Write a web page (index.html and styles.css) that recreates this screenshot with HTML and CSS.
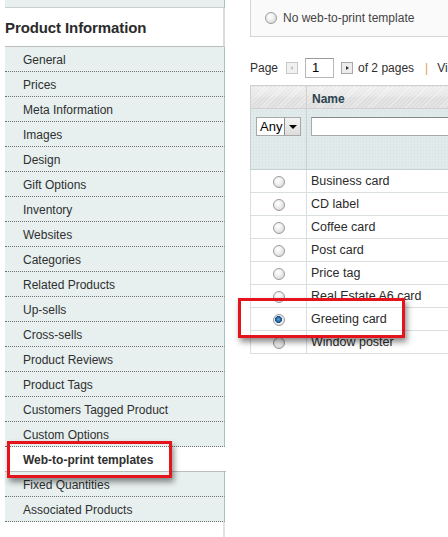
FILE: index.html
```html
<!DOCTYPE html>
<html>
<head>
<meta charset="utf-8">
<link rel="stylesheet" href="styles.css">
</head>
<body>
<div class="page">
  <aside class="side">
    <div class="side-top"></div>
    <h3 class="side-title">Product Information</h3>
    <ul class="tabs">
      <li class="tab">General</li>
      <li class="tab">Prices</li>
      <li class="tab">Meta Information</li>
      <li class="tab">Images</li>
      <li class="tab">Design</li>
      <li class="tab">Gift Options</li>
      <li class="tab">Inventory</li>
      <li class="tab">Websites</li>
      <li class="tab">Categories</li>
      <li class="tab">Related Products</li>
      <li class="tab">Up-sells</li>
      <li class="tab">Cross-sells</li>
      <li class="tab">Product Reviews</li>
      <li class="tab">Product Tags</li>
      <li class="tab">Customers Tagged Product</li>
      <li class="tab">Custom Options</li>
      <li class="tab active">Web-to-print templates</li>
      <li class="tab">Fixed Quantities</li>
      <li class="tab">Associated Products</li>
    </ul>
    <div class="side-rest"></div>
  </aside>
  <main class="main">
    <div class="none-box"><span class="radio"></span><span>No web-to-print template</span></div>
    <div class="pager">
      <span>Page</span>
      <span class="pbtn prev"></span>
      <span class="pinput">1</span>
      <span class="pbtn next"></span>
      <span class="pages">of 2 pages</span>
      <span class="sep">|</span>
      <span>Vi</span>
    </div>
    <table class="grid">
      <thead>
        <tr class="head">
          <th class="c1"></th>
          <th class="c2">Name</th>
        </tr>
        <tr class="filter">
          <td class="c1"><span class="select"><span class="sel-text">Any</span><span class="sel-btn"></span></span></td>
          <td class="c2"><span class="ftext"></span></td>
        </tr>
      </thead>
      <tbody>
        <tr><td class="c1"><span class="radio"></span></td><td class="c2">Business card</td></tr>
        <tr><td class="c1"><span class="radio"></span></td><td class="c2">CD label</td></tr>
        <tr><td class="c1"><span class="radio"></span></td><td class="c2">Coffee card</td></tr>
        <tr><td class="c1"><span class="radio"></span></td><td class="c2">Post card</td></tr>
        <tr><td class="c1"><span class="radio"></span></td><td class="c2">Price tag</td></tr>
        <tr><td class="c1"><span class="radio"></span></td><td class="c2">Real Estate A6 card</td></tr>
        <tr><td class="c1"><span class="radio checked"></span></td><td class="c2">Greeting card</td></tr>
        <tr><td class="c1"><span class="radio"></span></td><td class="c2">Window poster</td></tr>
      </tbody>
    </table>
  </main>
  <div class="mark mark-tab"></div>
  <div class="mark mark-row"></div>
</div>
</body>
</html>
```
FILE: styles.css
```css
* { box-sizing: border-box; }
html, body { margin: 0; padding: 0; background: #fff; }
body { font-family: "Liberation Sans", Arial, sans-serif; font-size: 12px; color: #2f2f2f; }

.page { position: relative; width: 448px; height: 537px; overflow: hidden; display: flex; }

.side { flex: none; width: 220px; margin-left: 5px; display: flex; flex-direction: column; }
.side-top { height: 8px; background: #e7efef; border-bottom: 1px solid #c9cfcf; border-right: 1px solid #a9c1c2; }
.side-title { margin: 0; height: 39px; padding-top: 2px; line-height: 36px; font-size: 15px; font-weight: bold; color: #2b2b2b;
  border-bottom: 1px solid #bdbdbd; border-right: 2px solid #dadada; letter-spacing: -0.1px; }
.tabs { list-style: none; margin: 0; padding: 0; }
.tab { height: 25px; padding-top: 2px; line-height: 22px; padding-left: 18px; background: #e7efef;
  border-bottom: 1px dotted #6f6f6f; border-right: 1px solid #a9c1c2; white-space: nowrap; }
.tab.active { background: #fff; font-weight: bold; border-right: none; border-bottom: 1px solid #bcbcbc; margin-right: -1px; }
.side-rest { flex: 1; border-right: 2px solid #e2e2e2; }

.main { flex: none; width: 420px; padding-left: 25px; }
.none-box { height: 37px; background: #fafafa; border: 1px solid #d6d6d6; border-top: none;
  display: flex; align-items: center; gap: 6px; padding-left: 14px; color: #444; }

.radio { display: inline-block; width: 12px; height: 12px; border-radius: 50%;
  border: 1px solid #9c9c9c; background: radial-gradient(circle at 40% 35%, #fff 0, #f2f2f2 35%, #cfcfcf 100%); flex: none; }
.radio.checked { background: radial-gradient(circle at 45% 45%, #6aa7db 0, #1a5f9e 2.5px, #1a4f80 3.2px, #f4f4f4 3.8px, #d0d0d0 100%); }

.pager { margin-top: 21px; height: 20px; display: flex; align-items: center; }
.pbtn { width: 12px; height: 12px; border: 1px solid #c9c9c9; background: #f1f1f1; position: relative; flex: none; }
.pbtn::after { content: ""; position: absolute; left: 4px; top: 3px; border-left: 3px solid #bbb; border-top: 2.5px solid transparent; border-bottom: 2.5px solid transparent; }
.prev { margin-left: 8px; }
.prev::after { border-left: none; border-right: 3px solid #c4c4c4; left: 3px; }
.next { margin-left: 7px; border-color: #a9a9a9; background: #ececec; }
.next::after { border-left-color: #333; }
.pinput { margin-left: 7px; width: 29px; height: 20px; border: 1px solid #b6b6b6; border-top-color: #9a9a9a; padding-left: 6px; line-height: 18px; font-size: 13px; color: #000; }
.pages { margin-left: 5px; }
.sep { margin: 0 9px 0 11px; color: #e3a04a; }

.grid { margin-top: 7px; border-collapse: collapse; width: 400px; }
.grid td, .grid th { padding: 0; border: 1px solid #d9dede; }
.grid .c1 { width: 56px; }
.head th { height: 23px; text-align: left; font-weight: bold; color: #2d444f; padding-left: 5px; padding-top: 4px;
  background-image: repeating-linear-gradient(135deg, rgba(255,255,255,0.55) 0 1px, transparent 1px 3px), linear-gradient(#ededed, #e4e4e4 45%, #dcdcdc 50%, #dcdcdc);
  border-color: #cfcfcf; }
.filter td { height: 61px; vertical-align: top; padding: 8px 5px 0 5px;
  background-color: #d9e5e5;
  background-image: linear-gradient(rgba(255,255,255,0.25) 1px, transparent 1px), linear-gradient(90deg, rgba(255,255,255,0.25) 1px, transparent 1px);
  background-size: 3px 3px; border-color: #c6d0d0; }
.filter .c2 { padding-left: 4px; }
.select { display: flex; width: 45px; height: 19px; border: 1px solid #a9a9a9; background: #fff; }
.sel-text { flex: 1; padding-left: 3px; line-height: 17px; font-size: 13px; color: #000; }
.sel-btn { width: 16px; height: 17px; background: linear-gradient(#f4f4f4, #dcdcdc); border-left: 1px solid #8f8f8f; position: relative; }
.sel-btn::after { content: ""; position: absolute; left: 4px; top: 7px; border-top: 4px solid #000; border-left: 4px solid transparent; border-right: 4px solid transparent; }
.ftext { display: block; height: 19px; background: #fff; border: 1px solid #a9a9a9; border-top-color: #888; }

tbody td { height: 23px; }
tbody .c1 { text-align: center; }
tbody .c1 .radio { vertical-align: middle; margin-top: 2px; }
tbody .c2 { padding-left: 4px; font-size: 12.5px; color: #2a2a2a; }

.mark { position: absolute; border: 3px solid #e5131b; box-shadow: 2px 4px 6px rgba(0,0,0,0.45); }
.mark-tab { left: 7px; top: 441px; width: 165px; height: 37px; }
.mark-row { left: 238px; top: 298px; width: 167px; height: 40px; }
```
